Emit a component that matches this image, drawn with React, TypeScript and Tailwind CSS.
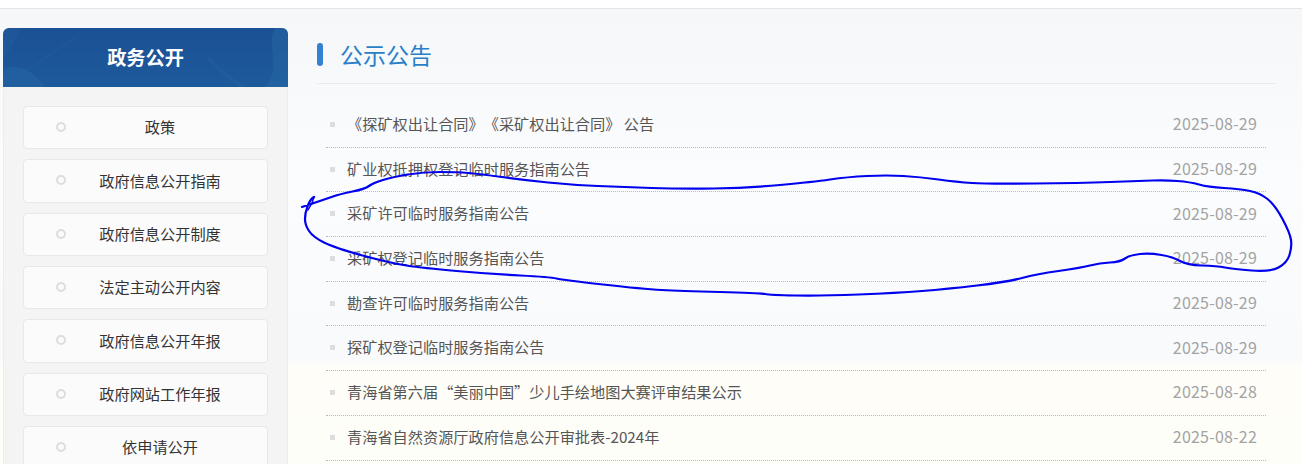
const font = { fontFamily: '"Noto Sans CJK SC", "Noto Sans", sans-serif' };

const side = ["政策", "政府信息公开指南", "政府信息公开制度", "法定主动公开内容", "政府信息公开年报", "政府网站工作年报", "依申请公开"];
const rows = [
  ["《探矿权出让合同》《采矿权出让合同》 公告", "2025-08-29"],
  ["矿业权抵押权登记临时服务指南公告", "2025-08-29"],
  ["采矿许可临时服务指南公告", "2025-08-29"],
  ["采矿权登记临时服务指南公告", "2025-08-29"],
  ["勘查许可临时服务指南公告", "2025-08-29"],
  ["探矿权登记临时服务指南公告", "2025-08-29"],
  ["青海省第六届“美丽中国”少儿手绘地图大赛评审结果公示", "2025-08-28"],
  ["青海省自然资源厅政府信息公开审批表-2024年", "2025-08-22"],
];

const pts: [number, number][] = [
  [302, 207], [323, 200], [340, 194], [365, 189], [373, 183], [393, 177], [423, 172], [457, 172], [480, 174],
  [523, 180], [573, 185], [623, 187], [680, 189], [747, 188], [813, 182], [847, 177], [887, 175], [920, 177],
  [957, 182], [987, 184], [1080, 183], [1140, 181], [1165, 180], [1190, 182], [1208, 187], [1240, 189], [1260, 193],
  [1275, 205], [1290, 233], [1292, 247], [1287, 263], [1270, 272], [1233, 269], [1217, 266], [1187, 265], [1173, 257],
  [1150, 253], [1130, 255], [1120, 262], [1100, 263], [1080, 268], [1037, 274], [1007, 282], [947, 289], [897, 293],
  [820, 296], [770, 295], [760, 293], [680, 291], [643, 289], [563, 280], [550, 277], [490, 274], [423, 268],
  [390, 263], [335, 248], [313, 237], [305, 225], [305, 213], [310, 200], [314, 197],
];

function smooth(p: [number, number][]) {
  let d = `M${p[0][0]} ${p[0][1]}`;
  for (let i = 1; i < p.length - 1; i++) {
    const mx = (p[i][0] + p[i + 1][0]) / 2;
    const my = (p[i][1] + p[i + 1][1]) / 2;
    d += ` Q${p[i][0]} ${p[i][1]} ${mx} ${my}`;
  }
  const last = p[p.length - 1];
  return `${d} L${last[0]} ${last[1]}`;
}

export default function App() {
  return (
    <div
      className="relative h-[464px] w-[1302px] overflow-hidden bg-[linear-gradient(180deg,#f6f7f9_10px,#fbfcfd_180px,#f9fafc_358px,#fefdf8_368px,#fefef8_464px)] [text-spacing-trim:space-all]"
      style={font}
    >
      <div className="h-[9px] border-b border-[#e4e4e4] bg-white" />
      <div className="flex pl-[3px] pt-[19px]">
        <aside className="w-[285px] shrink-0">
          <div className="relative flex h-[59px] items-center justify-center overflow-hidden rounded-t-md bg-[linear-gradient(180deg,#1b5094,#1d5a9c)]">
            <svg className="absolute inset-0" width="285" height="59" viewBox="0 0 285 59" fill="none">
              <path d="M0 52 C30 44 50 22 75 8" stroke="#2f6fa8" strokeWidth="2" opacity="0.18" />
              <path d="M0 59 L0 42 C15 32 32 45 42 59 Z" fill="#2b6ea8" opacity="0.35" />
              <path d="M0 0 L0 30 C10 20 14 8 18 0 Z" fill="#2b6ea8" opacity="0.2" />
              <path d="M285 0 L285 59 L262 59 C280 40 262 15 272 0 Z" fill="#2b6ea8" opacity="0.4" />
              <path d="M205 30 C215 40 225 50 240 59" stroke="#2f6fa8" strokeWidth="4" opacity="0.2" />
            </svg>
            <h2 className="relative text-[19.2px] font-bold text-white">政务公开</h2>
          </div>
          <div className="h-[400px] border-x border-[#ececec] bg-[#f4f4f4] px-[19px] pt-[19px]">
            {side.map((s) => (
              <div
                key={s}
                className="relative mb-[10px] flex h-[43.33px] items-center justify-center rounded border border-[#e8e8e8] bg-[#fbfbfc] pl-[29px] text-[15.2px] text-[#333]"
              >
                <span className="absolute left-[32px] top-[15px] size-[10px] rounded-full border-2 border-[#dddddd]" />
                <span className="-mt-[2px]">{s}</span>
              </div>
            ))}
          </div>
        </aside>
        <main className="ml-[29px] w-[959px]">
          <div className="flex h-[56px] items-center border-b border-[#e9ebef] pb-[2px]">
            <span className="h-[23px] w-[6px] rounded-[3px] bg-[#3481d0]" />
            <h1 className="ml-[17px] text-[23px] font-normal text-[#2a7fc9]">公示公告</h1>
          </div>
          <ul className="ml-[9px] mt-[19px] w-[940px]">
            {rows.map(([t, d]) => (
              <li
                key={t}
                className="flex h-[44.7px] items-center border-b border-dotted border-[#bbbbbb] pl-[4px] pr-[9px] text-[15.2px] text-[#555]"
              >
                <span className="-mt-[1px] size-[5px] shrink-0 bg-[#dddddd]" />
                <span className="-mt-[3px] ml-[12px] flex-1 truncate">{t}</span>
                <span className="-mt-[3px] text-[16px] tracking-[0.2px] text-[#a3a3a3]">{d}</span>
              </li>
            ))}
          </ul>
        </main>
      </div>
      <svg className="pointer-events-none absolute inset-0" width="1302" height="464" viewBox="0 0 1302 464" fill="none">
        <path d={smooth(pts)} stroke="#0000ee" strokeWidth="2.2" strokeLinejoin="round" strokeLinecap="round" />
        <path d="M314 197 L312 203 L308 210" stroke="#0000ee" strokeWidth="1.5" strokeLinecap="round" />
      </svg>
    </div>
  );
}
